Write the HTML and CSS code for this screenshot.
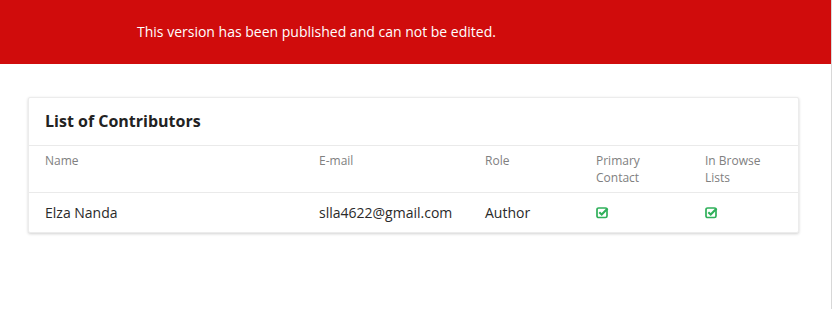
FILE: index.html
```html
<!DOCTYPE html>
<html>
<head>
<meta charset="utf-8">
<link rel="stylesheet" href="styles.css">
</head>
<body>
<div class="page">
  <div class="banner">This version has been published and can not be edited.</div>
  <div class="content">
    <div class="card">
      <div class="card-title">List of Contributors</div>
      <div class="row head">
        <div>Name</div>
        <div>E-mail</div>
        <div>Role</div>
        <div>Primary<br>Contact</div>
        <div>In Browse<br>Lists</div>
      </div>
      <div class="row body">
        <div>Elza Nanda</div>
        <div>slla4622@gmail.com</div>
        <div>Author</div>
        <div><svg class="chk" viewBox="0 0 13 13" width="13" height="13"><rect x="1" y="2" width="10" height="9.5" rx="1.6" fill="none" stroke="#2fb05a" stroke-width="1.7"/><path d="M3.3 6.2 L5.7 8.5 L11.6 2.4" fill="none" stroke="#2fb05a" stroke-width="2.1"/></svg></div>
        <div><svg class="chk" viewBox="0 0 13 13" width="13" height="13"><rect x="1" y="2" width="10" height="9.5" rx="1.6" fill="none" stroke="#2fb05a" stroke-width="1.7"/><path d="M3.3 6.2 L5.7 8.5 L11.6 2.4" fill="none" stroke="#2fb05a" stroke-width="2.1"/></svg></div>
      </div>
    </div>
  </div>
</div>
</body>
</html>
```
FILE: styles.css
```css
html, body {
  margin: 0;
  padding: 0;
  background: #fff;
  font-family: "Open Sans", "Noto Sans", sans-serif;
}
.page {
  width: 831px;
  height: 309px;
  border-right: 1px solid #d8d8d8;
  box-sizing: content-box;
}
.banner {
  height: 64px;
  background: #d00c0c;
  color: #fff;
  font-size: 14px;
  line-height: 64px;
  padding-left: 137px;
}
.content {
  padding: 33px 32px 0 28px;
}
.card {
  border: 1px solid #ececec;
  border-radius: 2px;
  box-shadow: 0 1px 3px rgba(0,0,0,0.18);
  background: #fff;
}
.card-title {
  height: 47px;
  line-height: 47px;
  padding-left: 16px;
  font-size: 16px;
  font-weight: 700;
  color: #222;
  border-bottom: 1px solid #eaeaea;
}
.row {
  display: grid;
  grid-template-columns: 274px 166px 111px 109px 1fr;
  padding: 0 16px;
}
.head {
  height: 46px;
  box-sizing: content-box;
  font-size: 12px;
  line-height: 17px;
  color: #808080;
  border-bottom: 1px solid #eaeaea;
}
.head > div {
  padding-top: 6px;
}
.body {
  height: 39px;
  font-size: 14px;
  color: #2a2a2a;
  align-items: center;
}
.chk {
  display: block;
}
```
